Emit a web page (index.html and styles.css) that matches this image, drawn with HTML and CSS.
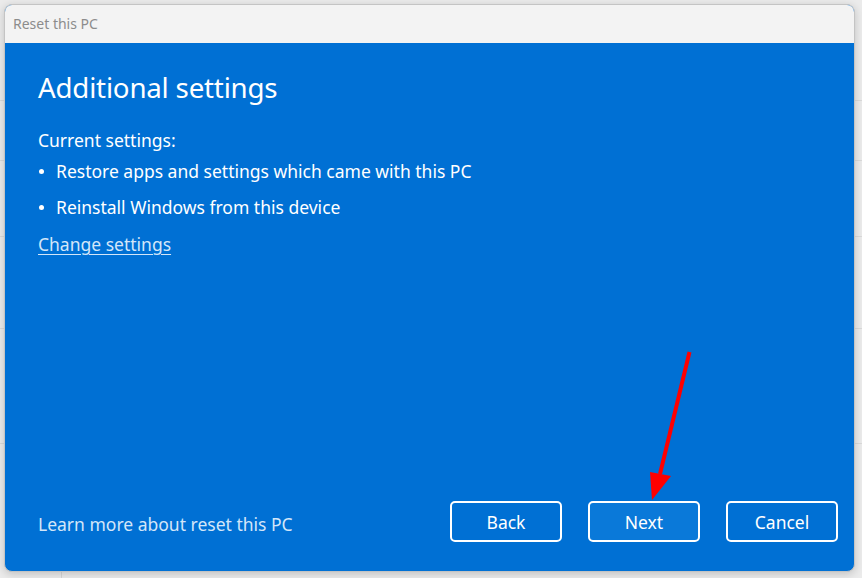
FILE: index.html
```html
<!DOCTYPE html>
<html lang="en">
<head>
<meta charset="utf-8">
<title>Reset this PC</title>
<link rel="stylesheet" href="styles.css">
</head>
<body>
<div class="desktop">
  <div class="backdrop">
    <div class="bg-line l1"></div>
    <div class="bg-line l2"></div>
    <div class="bg-line l3"></div>
    <div class="bg-line l4"></div>
    <div class="bg-line l5"></div>
    <div class="bg-vline"></div>
  </div>
  <div class="dialog">
    <div class="titlebar">Reset this PC</div>
    <div class="content">
      <div class="main">
        <h1 class="heading">Additional settings</h1>
        <p class="label">Current settings:</p>
        <ul class="list">
          <li>Restore apps and settings which came with this PC</li>
          <li>Reinstall Windows from this device</li>
        </ul>
        <a class="link" href="#">Change settings</a>
      </div>
      <div class="footer">
        <a class="learn" href="#">Learn more about reset this PC</a>
        <div class="buttons">
          <button class="btn">Back</button>
          <button class="btn btn-primary">Next</button>
          <button class="btn">Cancel</button>
        </div>
      </div>
    </div>
  </div>
  <svg class="arrow" width="862" height="578" viewBox="0 0 862 578">
    <line x1="689.5" y1="352" x2="660" y2="474" stroke="#ff0000" stroke-width="4"/>
    <polygon points="650,472 671,476 652,500" fill="#ff0000"/>
  </svg>
</div>
</body>
</html>
```
FILE: styles.css
```css
* { box-sizing: border-box; }
html, body {
  margin: 0;
  padding: 0;
}
body {
  width: 862px;
  height: 578px;
  overflow: hidden;
  background: #e9e9e9;
  font-family: "Noto Sans", "Open Sans", sans-serif;
}
.desktop {
  position: relative;
  width: 862px;
  height: 578px;
}
.backdrop {
  position: absolute;
  inset: 0;
  background: #ebebeb;
}
.bg-line {
  position: absolute;
  left: 0;
  right: 0;
  height: 1px;
  background: #dadada;
}
.l1 { top: 100px; }
.l2 { top: 160px; }
.l3 { top: 236px; }
.l4 { top: 328px; }
.l5 { top: 443px; }
.bg-vline {
  position: absolute;
  left: 61px;
  top: 560px;
  bottom: 0;
  width: 1px;
  background: #d6d6d6;
}
.dialog {
  position: absolute;
  left: 4px;
  top: 4px;
  width: 851px;
  height: 568px;
  border-radius: 8px;
  overflow: hidden;
  border: 1px solid #c4c4c4;
  box-shadow: 0 2px 8px rgba(0,0,0,0.18);
  display: flex;
  flex-direction: column;
  background: #0070d4;
}
.titlebar {
  height: 38px;
  flex: none;
  background: #f3f3f3;
  color: #8c8c8c;
  font-size: 14px;
  padding: 9px 0 0 8px;
}
.content {
  flex: 1;
  display: flex;
  flex-direction: column;
  justify-content: space-between;
  padding: 26px 16px 29px 33px;
  color: #ffffff;
}
.heading {
  margin: 0;
  font-weight: 400;
  font-size: 27.7px;
  line-height: 36px;
  letter-spacing: -0.2px;
}
.label {
  margin: 23px 0 0;
  font-size: 17.5px;
  line-height: 24px;
}
.list {
  list-style: none;
  margin: 7px 0 0;
  padding: 0;
  font-size: 17.5px;
  line-height: 24px;
}
.list li {
  position: relative;
  padding-left: 18px;
  margin-bottom: 12px;
}
.list li::before {
  content: "";
  position: absolute;
  left: 1px;
  top: 10px;
  width: 5px;
  height: 5px;
  border-radius: 50%;
  background: #ffffff;
}
.link {
  display: inline-block;
  margin-top: 1px;
  color: #d3e6f9;
  font-size: 17.5px;
  line-height: 24px;
  text-decoration: underline;
  text-underline-offset: 3px;
  text-decoration-thickness: 1px;
}
.footer {
  display: flex;
  align-items: center;
  justify-content: space-between;
}
.learn {
  color: #d3e6f9;
  font-size: 17.5px;
  text-decoration: none;
  margin-top: 4px;
}
.buttons {
  display: flex;
  gap: 26px;
}
.btn {
  width: 112px;
  height: 41px;
  border: 2px solid #ffffff;
  border-radius: 5px;
  background: transparent;
  color: #ffffff;
  font-family: "Noto Sans", "Open Sans", sans-serif;
  font-size: 17.5px;
  padding: 0;
}
.btn-primary {
  background: #0a79d9;
}
.arrow {
  position: absolute;
  left: 0;
  top: 0;
  pointer-events: none;
}
```
